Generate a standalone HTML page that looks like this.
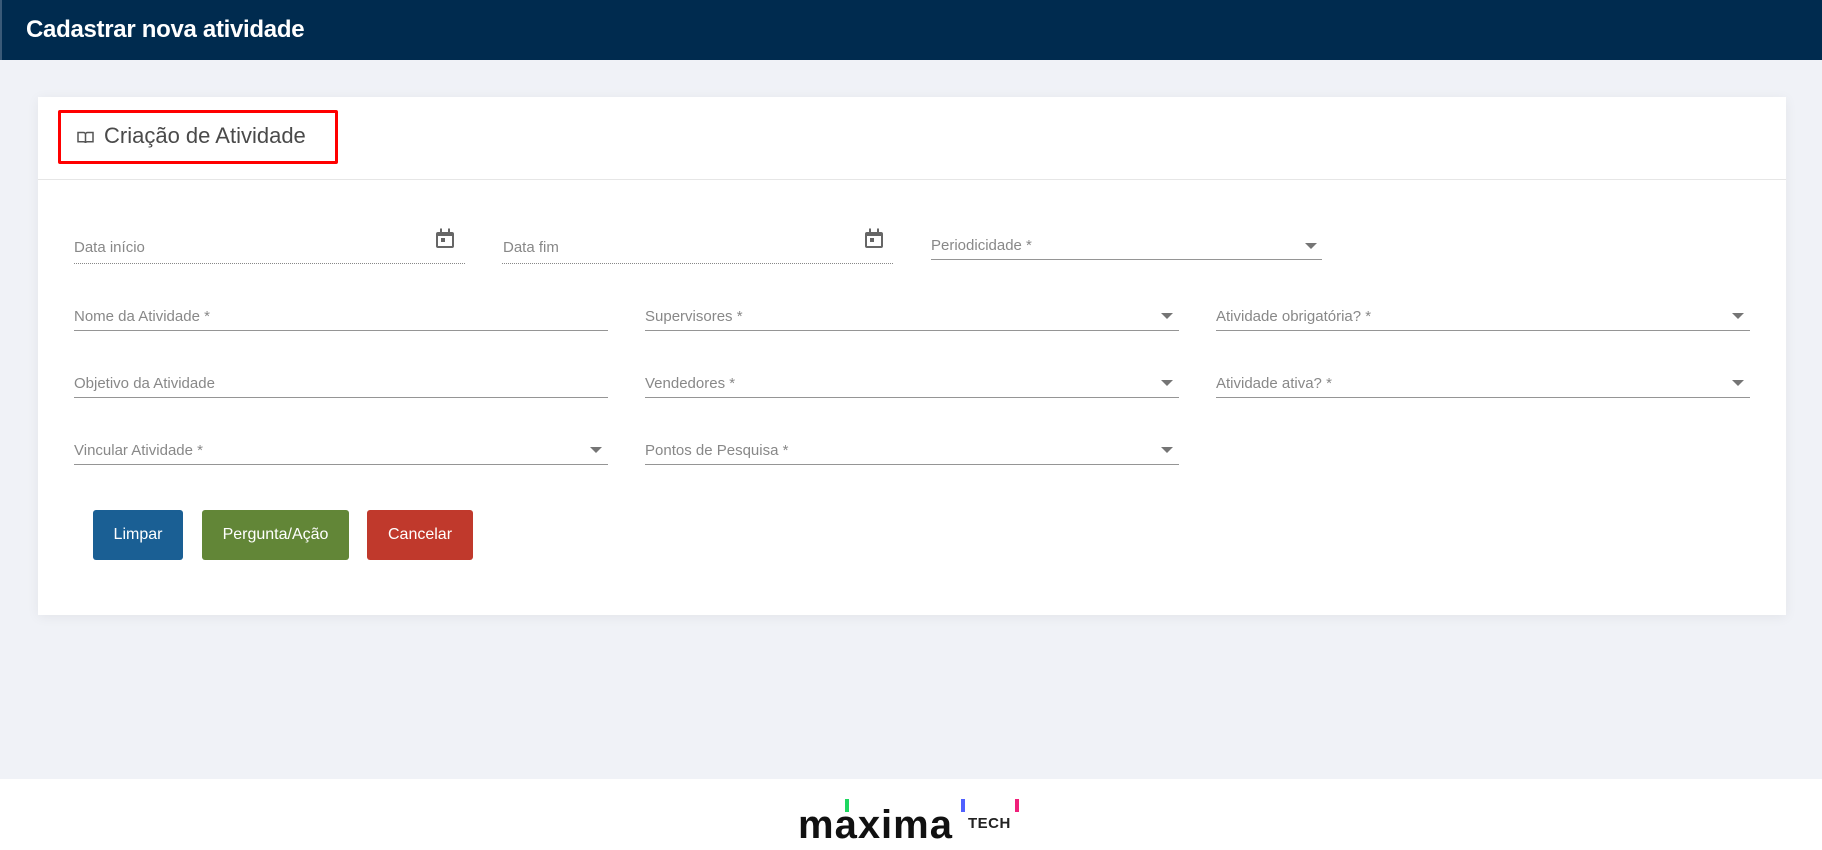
<!DOCTYPE html>
<html><head><meta charset="utf-8">
<style>
*{margin:0;padding:0;box-sizing:border-box}
body{width:1822px;height:850px;overflow:hidden;background:#f0f2f7;font-family:"Liberation Sans",sans-serif;position:relative}
.hdr{position:absolute;left:0;top:0;width:1822px;height:60px;background:#002b4f;border-left:2px solid #3a5a78}
.hdr span{position:absolute;left:24px;top:16px;color:#fff;font-size:24px;font-weight:600;letter-spacing:-0.3px}
.card{position:absolute;left:38px;top:97px;width:1748px;height:518px;background:#fff;box-shadow:0 2px 12px rgba(0,0,0,0.06)}
.div{position:absolute;left:38px;top:179px;width:1748px;height:1px;background:#e6e6e6}
.red{position:absolute;left:58px;top:110px;width:280px;height:54px;border:3px solid #ff0000;border-radius:2px}
.ttl{position:absolute;left:104px;top:123px;font-size:22px;color:#4a4a4a;}
.lbl{position:absolute;font-size:15px;color:#888;line-height:15px;white-space:nowrap}
.ul{position:absolute;height:1px;background:#959595}
.dot{position:absolute;height:0;border-top:1px dotted #888}
.arr{position:absolute;width:0;height:0;border-left:6px solid transparent;border-right:6px solid transparent;border-top:6px solid #757575}
.btn{position:absolute;top:510px;height:50px;border-radius:3px;color:#fff;font-size:16px;text-align:center;line-height:50px}
.foot{position:absolute;left:0;top:779px;width:1822px;height:71px;background:#fff}
</style></head><body>
<div class="hdr"><span>Cadastrar nova atividade</span></div>
<div class="card"></div>
<div class="div"></div>
<div class="red"></div>
<svg style="position:absolute;left:77px;top:131px" width="17" height="13" viewBox="0 0 17 13"><path d="M1 1.5h5.5c1 0 2 .8 2 1.8V12c0-.8-.9-1.3-2-1.3H1z M16 1.5h-5.5c-1 0-2 .8-2 1.8V12c0-.8.9-1.3 2-1.3H16z" fill="none" stroke="#555" stroke-width="1.5"/></svg>
<div class="ttl">Criação de Atividade</div>

<div class="lbl" style="left:74px;top:240px">Data início</div>
<div class="dot" style="left:74px;top:263px;width:391px"></div>
<svg style="position:absolute;left:435px;top:228px" width="20" height="21" viewBox="0 0 20 21"><rect x="1" y="4" width="18" height="16" rx="2" fill="#666"/><rect x="3" y="8" width="14" height="10" fill="#fff"/><rect x="5" y="0.5" width="2" height="5" fill="#666"/><rect x="13" y="0.5" width="2" height="5" fill="#666"/><rect x="6" y="10" width="4" height="4" fill="#666"/></svg>
<div class="lbl" style="left:503px;top:240px">Data fim</div>
<div class="dot" style="left:502px;top:263px;width:391px"></div>
<svg style="position:absolute;left:864px;top:228px" width="20" height="21" viewBox="0 0 20 21"><rect x="1" y="4" width="18" height="16" rx="2" fill="#666"/><rect x="3" y="8" width="14" height="10" fill="#fff"/><rect x="5" y="0.5" width="2" height="5" fill="#666"/><rect x="13" y="0.5" width="2" height="5" fill="#666"/><rect x="6" y="10" width="4" height="4" fill="#666"/></svg>
<div class="lbl" style="left:931px;top:238px">Periodicidade *</div>
<div class="ul" style="left:931px;top:259px;width:391px"></div>
<div class="arr" style="left:1305px;top:243px"></div>

<div class="lbl" style="left:74px;top:309px">Nome da Atividade *</div>
<div class="ul" style="left:74px;top:330px;width:534px"></div>
<div class="lbl" style="left:645px;top:309px">Supervisores *</div>
<div class="ul" style="left:645px;top:330px;width:534px"></div>
<div class="arr" style="left:1161px;top:313px"></div>
<div class="lbl" style="left:1216px;top:309px">Atividade obrigatória? *</div>
<div class="ul" style="left:1216px;top:330px;width:534px"></div>
<div class="arr" style="left:1732px;top:313px"></div>

<div class="lbl" style="left:74px;top:376px">Objetivo da Atividade</div>
<div class="ul" style="left:74px;top:397px;width:534px"></div>
<div class="lbl" style="left:645px;top:376px">Vendedores *</div>
<div class="ul" style="left:645px;top:397px;width:534px"></div>
<div class="arr" style="left:1161px;top:380px"></div>
<div class="lbl" style="left:1216px;top:376px">Atividade ativa? *</div>
<div class="ul" style="left:1216px;top:397px;width:534px"></div>
<div class="arr" style="left:1732px;top:380px"></div>

<div class="lbl" style="left:74px;top:443px">Vincular Atividade *</div>
<div class="ul" style="left:74px;top:464px;width:534px"></div>
<div class="arr" style="left:590px;top:447px"></div>
<div class="lbl" style="left:645px;top:443px">Pontos de Pesquisa *</div>
<div class="ul" style="left:645px;top:464px;width:534px"></div>
<div class="arr" style="left:1161px;top:447px"></div>

<div class="btn" style="left:93px;width:90px;background:#1a5f94">Limpar</div>
<div class="btn" style="left:202px;width:147px;background:#628637">Pergunta/Ação</div>
<div class="btn" style="left:367px;width:106px;background:#c0392c">Cancelar</div>

<div class="foot"></div>
<div style="position:absolute;left:798px;top:803px;font-size:40px;font-weight:bold;color:#111;letter-spacing:1px;line-height:44px">maxima</div>
<div style="position:absolute;left:845px;top:799px;width:4px;height:13px;background:#1ed760"></div>
<div style="position:absolute;left:961px;top:799px;width:4px;height:13px;background:#5060ff"></div>
<div style="position:absolute;left:1015px;top:799px;width:4px;height:13px;background:#f0207a"></div>
<div style="position:absolute;left:968px;top:817px;font-size:15px;font-weight:600;color:#222;line-height:14px;letter-spacing:0.5px">TECH</div>
</body></html>
